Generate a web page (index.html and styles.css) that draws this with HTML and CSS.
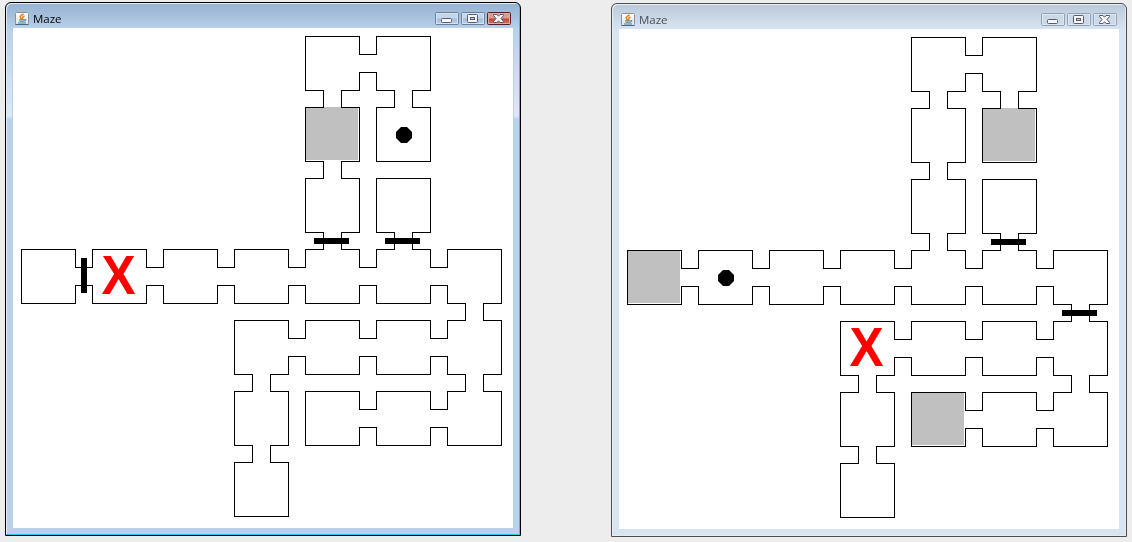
FILE: index.html
```html
<!DOCTYPE html>
<html lang="en">
<head>
<meta charset="utf-8">
<title>Maze</title>
<link rel="stylesheet" href="styles.css">
</head>
<body>
<svg class="defs" width="0" height="0" aria-hidden="true">
  <defs>
    <rect id="room" class="wall" x="0.5" y="0.5" width="54" height="54"/>
    <g id="east"><rect class="gap" x="54" y="19" width="18" height="17"/><path class="wall" d="M54 18.5H72M54 36.5H72"/></g>
    <g id="south"><rect class="gap" x="19" y="54" width="17" height="18"/><path class="wall" d="M18.5 54V72M36.5 54V72"/></g>
    <rect id="visited" class="visited" width="53" height="53"/>
    <rect id="door-south" x="9" y="60" width="35" height="6"/>
    <rect id="door-east" x="60" y="9" width="6" height="35"/>
    <path id="player" d="M25 20h6l5 5v6l-5 5h-6l-5-5v-6z"/>
    <g id="maze">
      <use href="#room" x="292" y="0"/><use href="#room" x="363" y="0"/>
      <use href="#room" x="292" y="71"/><use href="#room" x="363" y="71"/>
      <use href="#room" x="292" y="142"/><use href="#room" x="363" y="142"/>
      <use href="#room" x="8" y="213"/><use href="#room" x="79" y="213"/><use href="#room" x="150" y="213"/><use href="#room" x="221" y="213"/><use href="#room" x="292" y="213"/><use href="#room" x="363" y="213"/><use href="#room" x="434" y="213"/>
      <use href="#room" x="221" y="284"/><use href="#room" x="292" y="284"/><use href="#room" x="363" y="284"/><use href="#room" x="434" y="284"/>
      <use href="#room" x="221" y="355"/><use href="#room" x="292" y="355"/><use href="#room" x="363" y="355"/><use href="#room" x="434" y="355"/>
      <use href="#room" x="221" y="426"/>
      <use href="#east" x="292" y="0"/>
      <use href="#east" x="8" y="213"/><use href="#east" x="79" y="213"/><use href="#east" x="150" y="213"/><use href="#east" x="221" y="213"/><use href="#east" x="292" y="213"/><use href="#east" x="363" y="213"/>
      <use href="#east" x="221" y="284"/><use href="#east" x="292" y="284"/><use href="#east" x="363" y="284"/>
      <use href="#east" x="292" y="355"/><use href="#east" x="363" y="355"/>
      <use href="#south" x="292" y="0"/><use href="#south" x="363" y="0"/>
      <use href="#south" x="292" y="71"/>
      <use href="#south" x="292" y="142"/><use href="#south" x="363" y="142"/>
      <use href="#south" x="434" y="213"/>
      <use href="#south" x="221" y="284"/><use href="#south" x="434" y="284"/>
      <use href="#south" x="221" y="355"/>
    </g>
    <linearGradient id="tile" x1="0" y1="0" x2="0" y2="1"><stop offset="0" stop-color="#fff"/><stop offset="1" stop-color="#dce3e9"/></linearGradient>
    <g id="java">
      <rect x=".5" y=".5" width="13" height="12" rx="1" fill="url(#tile)" stroke="#8494a5"/>
      <path d="M.5 12.5h13" stroke="#466580"/>
      <path d="M8.5 2C4 4 5 5 6.3 7M9.5 4C6.5 5 8.5 6 7 7.3" fill="none" stroke="#ed7b16" stroke-width="1.5"/>
      <path d="M4 7.8h6M10 7.5c2 0 1 1.5-1 1.7M4.5 9.2h4.5M3 11h8" fill="none" stroke="#587b9b"/>
    </g>
    <g id="min"><rect x="6.5" y="6.5" width="10" height="4" rx="1" fill="#f6f6f6" stroke="#555b70"/></g>
    <g id="max"><rect x="6.5" y="2.5" width="10" height="8" rx="1" fill="#f6f6f6" stroke="#555b70"/><rect x="9.5" y="5.5" width="4" height="2" fill="#bdd0e3" stroke="#555b70"/></g>
    <g id="close"><path d="M6.5 2.5h3.5l1.5 1.7L13 2.5h3.5v1L14 6.5l2.5 3v1H13l-1.5-1.7L10 10.5H6.5v-1L9 6.5l-2.5-3z" fill="#f8f8f8" stroke="#555b70"/></g>
  </defs>
</svg>
<main class="desktop">
  <section class="window active">
    <header class="titlebar">
      <svg class="app-icon" width="14" height="13"><use href="#java"/></svg>
      <h1 class="title">Maze</h1>
      <div class="controls">
        <button class="control" aria-label="Minimize"><svg class="glyph" viewBox="0 0 23 13"><use href="#min"/></svg></button>
        <button class="control" aria-label="Maximize"><svg class="glyph" viewBox="0 0 23 13"><use href="#max"/></svg></button>
        <button class="control close" aria-label="Close"><svg class="glyph" viewBox="0 0 23 13"><use href="#close"/></svg></button>
      </div>
    </header>
    <svg class="board" width="500" height="500">
      <g transform="translate(0 8)">
        <use href="#maze"/>
        <use href="#visited" x="292" y="71"/>
        <use href="#player" x="363" y="71"/>
        <use href="#door-south" x="292" y="142"/><use href="#door-south" x="363" y="142"/>
        <use href="#door-east" x="8" y="213"/>
        <text class="goal" transform="translate(105.5 258) scale(.93 1)">X</text>
      </g>
    </svg>
  </section>
  <section class="window inactive">
    <header class="titlebar">
      <svg class="app-icon" width="14" height="13"><use href="#java"/></svg>
      <h1 class="title">Maze</h1>
      <div class="controls">
        <button class="control" aria-label="Minimize"><svg class="glyph" viewBox="0 0 23 13"><use href="#min"/></svg></button>
        <button class="control" aria-label="Maximize"><svg class="glyph" viewBox="0 0 23 13"><use href="#max"/></svg></button>
        <button class="control close" aria-label="Close"><svg class="glyph" viewBox="0 0 23 13"><use href="#close"/></svg></button>
      </div>
    </header>
    <svg class="board" width="500" height="500">
      <g transform="translate(0 8)">
        <use href="#maze"/>
        <use href="#visited" x="363" y="71"/><use href="#visited" x="8" y="213"/><use href="#visited" x="292" y="355"/>
        <use href="#player" x="79" y="213"/>
        <use href="#door-south" x="363" y="142"/><use href="#door-south" x="434" y="213"/>
        <text class="goal" transform="translate(247.5 329) scale(.93 1)">X</text>
      </g>
    </svg>
  </section>
</main>
</body>
</html>
```
FILE: styles.css
```css
* { box-sizing: border-box; }
body { margin: 0; background: #ededed; overflow: hidden; }
.defs { display: block; }
.desktop { display: flex; align-items: flex-start; gap: 90px; width: 1132px; height: 542px; padding: 2px 5px; }
.window {
  flex: none;
  width: 516px;
  height: 534px;
  border: 1px solid #000;
  border-radius: 6px 6px 0 0;
  padding: 0 7px 7px;
}
.active {
  background: linear-gradient(#98b3d2 0, #a4bedb 12px, #b8d0e9 25px, #dce9f7 113px, #b9d1ea 116px);
  box-shadow: inset -1px -1px #28c8e8, inset 1px 1px #dfeaf5;
}
.active .board { box-shadow: 0 0 0 1px #b9d1ea; }
.inactive {
  margin-top: 1px;
  border-color: #4c4c50;
  background: linear-gradient(#bac9d8 0, #c8d6e4 12px, #d7e4f2 25px);
  box-shadow: inset 1px 1px #e8eff6, inset -1px -1px #e4ebf2;
}
.titlebar { display: flex; align-items: center; height: 25px; padding: 6px 2px 0; }
.app-icon { display: block; }
.title { margin: 0 0 0 4px; font: 400 11.5px/16px "Open Sans", "Noto Sans", sans-serif; color: #000; }
.inactive .title { color: #4b4f55; }
.controls { display: flex; gap: 2px; margin: -1px 0 0 auto; }
.control {
  width: 24px;
  height: 13px;
  padding: 0;
  border: 1px solid #6b809e;
  border-radius: 1.5px;
  background: linear-gradient(#c4d6e9 48%, #a2bcd9 52%, #b8d0e8);
  box-shadow: inset 0 0 0 1px #d6e3f0;
}
.active .close { border-color: #581d2b; background: linear-gradient(#dc9b91 48%, #bd4431 52%, #d6765d); box-shadow: inset 0 0 0 1px #e4aaa0; }
.inactive .control { border-color: #92a1b5; background: #cad8e7; box-shadow: inset 0 0 0 1px #dde7f1; }
.glyph { display: block; width: 23px; height: 13px; margin: -1px; }
.board { display: block; background: #fff; }
.wall { fill: none; stroke: #000; stroke-width: 1; }
.gap { fill: #fff; }
.visited { fill: #c0c0c0; mix-blend-mode: multiply; }
.goal { font: 700 55px "Liberation Sans", Arial, sans-serif; fill: #f00; text-anchor: middle; }
```
